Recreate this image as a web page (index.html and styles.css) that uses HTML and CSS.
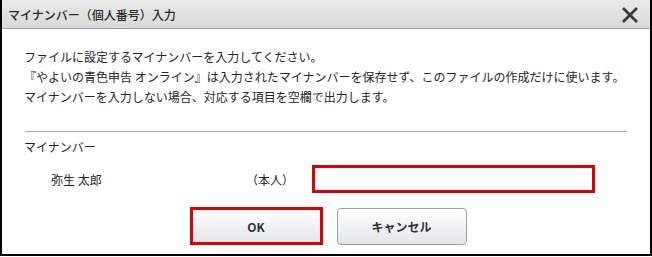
FILE: index.html
```html
<!DOCTYPE html>
<html lang="ja">
<head>
    <meta charset="UTF-8">
    <title>マイナンバー（個人番号）入力</title>
    <link rel="stylesheet" href="styles.css">
</head>
<body>

    <!-- Dialog -->
    <div class="dialog">
        <div class="dialog-title">
            <span class="title-text">マイナンバー（個人番号）入力</span>
            <span class="close-btn">
                <svg width="16" height="16" viewBox="0 0 16 16">
                    <path d="M2 2 L14 14 M14 2 L2 14" stroke="#3a3a3a" stroke-width="2.8" stroke-linecap="square"/>
                </svg>
            </span>
        </div>

        <div class="dialog-body">
            <p class="intro">ファイルに設定するマイナンバーを入力してください。<br>『やよいの青色申告 オンライン』は入力されたマイナンバーを保存せず、このファイルの作成だけに使います。<br>マイナンバーを入力しない場合、対応する項目を空欄で出力します。</p>

            <div class="separator"></div>

            <div class="section-label">マイナンバー</div>

            <div class="field-row">
                <span class="person-name">弥生 太郎</span>
                <span class="person-role">（本人）</span>
                <input type="text" class="number-input">
            </div>

            <div class="buttons">
                <a href="#" class="button button-ok">OK</a>
                <a href="#" class="button button-cancel">キャンセル</a>
            </div>
        </div>
    </div>

</body>
</html>
```

FILE: styles.css
```css
* {
    box-sizing: border-box;
}

body {
    margin: 0;
    padding: 0;
    background: #fff;
    font-family: "Noto Sans CJK JP", "Noto Sans", sans-serif;
    font-size: 12px;
    color: #262626;
}

.dialog {
    width: 652px;
    height: 256px;
    border-left: 2px solid #000;
    border-right: 2px solid #000;
    border-bottom: 2px solid #000;
    background: #fff;
}

/* Title bar */
.dialog-title {
    height: 29px;
    display: flex;
    align-items: center;
    justify-content: space-between;
    padding: 0 12px 0 6px;
    background: linear-gradient(#e9e9e9, #d9d9d9);
    border-bottom: 1px solid #a3a3a3;
}

.title-text {
    font-size: 12px;
    color: #2a2a2a;
    font-weight: 500;
}

.close-btn {
    display: flex;
    margin-top: 1px;
}

/* Body */
.dialog-body {
    padding: 18px 0 0 22px;
}

.intro {
    margin: 0;
    line-height: 20px;
}

.separator {
    height: 1px;
    background: #aaa;
    margin: 24px 23px 0 1px;
}

.section-label {
    margin-top: 5px;
    line-height: 20px;
}

.field-row {
    display: flex;
    align-items: center;
    margin-top: 8px;
    padding-left: 27px;
}

.person-name {
    width: 195px;
}

.person-role {
    width: 66px;
}

.number-input {
    width: 283px;
    height: 28px;
    border: 3px solid #e10000;
    background: #fff;
    margin: 0;
    padding: 0 6px;
    outline: none;
}

/* Buttons */
.buttons {
    display: flex;
    justify-content: center;
    gap: 14px;
    margin-top: 14px;
    margin-left: -18px;
}

.button {
    display: flex;
    align-items: center;
    justify-content: center;
    font-weight: bold;
    font-size: 12px;
    color: #333;
    text-decoration: none;
    background: linear-gradient(#ffffff, #e3e5e9);
}

.button-ok {
    width: 133px;
    height: 38px;
    border: 3px solid #e10000;
}

.button-cancel {
    width: 130px;
    height: 37px;
    margin-top: 1px;
    border: 1px solid #a0a0a0;
    border-radius: 4px;
}
```
